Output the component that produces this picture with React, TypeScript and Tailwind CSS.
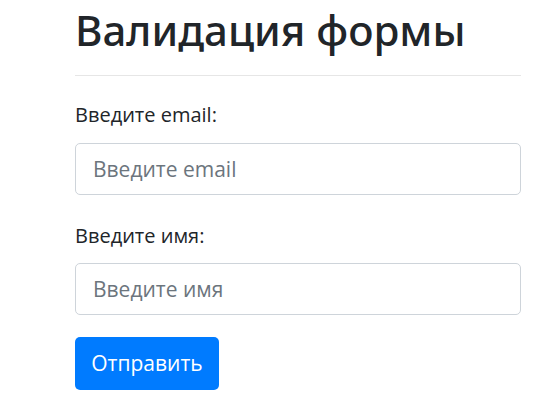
import { useState } from "react";

export default function App() {
    const [email, setEmail] = useState("");
    const [name, setName] = useState("");

    return (
        <div className="min-h-[417px] bg-white font-['Open_Sans','Noto_Sans',sans-serif] text-[#212529]">
            <form
                className="ml-[75px] flex w-[446px] flex-col pt-[5px]"
                onSubmit={(e) => e.preventDefault()}
            >
                <h1 className="font-['Noto_Sans','Open_Sans',sans-serif] text-[42px] leading-[1.2] font-medium">
                    Валидация формы
                </h1>
                <hr className="mt-[20px] border-t border-[#e6e6e6]" />

                <label htmlFor="email" className="mt-[24px] text-[20px] leading-[30px]">
                    Введите email:
                </label>
                <input
                    id="email"
                    type="email"
                    value={email}
                    onChange={(e) => setEmail(e.target.value)}
                    placeholder="Введите email"
                    className="mt-[13px] h-[52px] rounded-[5px] border border-[#ced4da] px-[17px] text-[21px] text-[#495057] outline-none placeholder:text-[#6c757d]"
                />

                <label htmlFor="name" className="mt-[26px] text-[20px] leading-[30px]">
                    Введите имя:
                </label>
                <input
                    id="name"
                    type="text"
                    value={name}
                    onChange={(e) => setName(e.target.value)}
                    placeholder="Введите имя"
                    className="mt-[12px] h-[52px] rounded-[5px] border border-[#ced4da] px-[17px] text-[21px] text-[#495057] outline-none placeholder:text-[#6c757d]"
                />

                <button
                    type="submit"
                    className="mt-[22px] h-[53px] w-[144px] rounded-[5px] bg-[#007bff] text-[21px] text-white"
                >
                    Отправить
                </button>
            </form>
        </div>
    );
}
